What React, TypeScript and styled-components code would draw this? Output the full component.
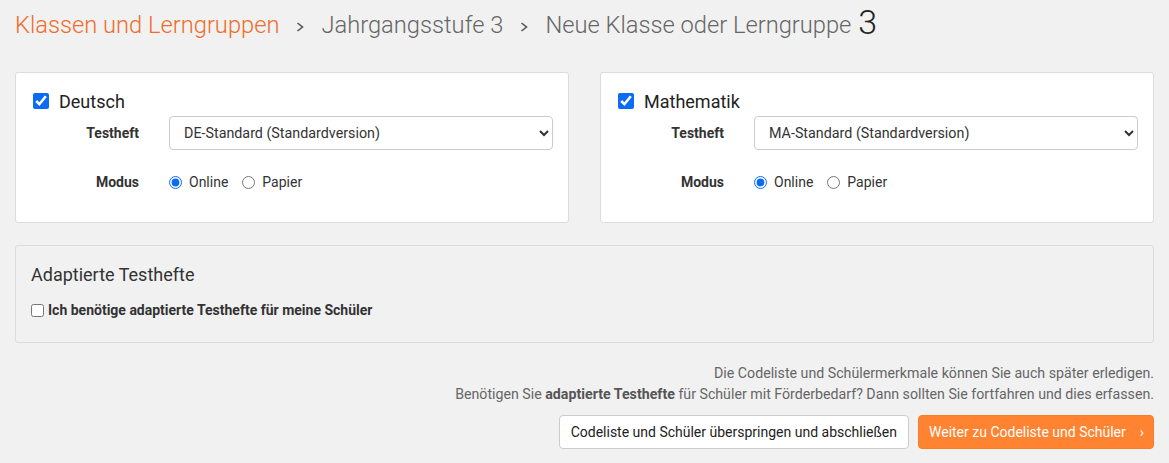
import { FC } from "react";
import styled, { createGlobalStyle } from "styled-components";

const GlobalStyle = createGlobalStyle`
  html, body {
    margin: 0;
    padding: 0;
    background: #f1f1f1;
  }
  body {
    font-family: Roboto, "Liberation Sans", Arial, sans-serif;
    color: #333;
  }
`;

const Page = styled.div`
  padding: 0 15px;
  width: 1139px;
`;

const Breadcrumb = styled.h1`
  margin: 0;
  height: 48px;
  display: flex;
  align-items: center;
  gap: 17px;
  font-size: 23.7px;
  font-weight: 300;
  color: #666;
  padding-top: 1px;

  .home {
    color: #ef6c2a;
  }
  .num {
    font-size: 34px;
    color: #222;
    margin-left: -10px;
    margin-top: -6px;
  }
  svg {
    margin-top: 3px;
  }
`;

const Chevron: FC = () => (
  <svg width="8" height="10" viewBox="0 0 8 10">
    <polyline points="1.5,1 6.5,5 1.5,9" fill="none" stroke="#555" strokeWidth="1.6" />
  </svg>
);

const CardRow = styled.div`
  display: grid;
  grid-template-columns: 1fr 1fr;
  gap: 31px;
  margin-top: 23px;
`;

const Card = styled.section`
  background: #fff;
  border: 1px solid #dcdcdc;
  border-radius: 3px;
  padding: 17px 15px 0 17px;
  height: 151px;
  box-sizing: border-box;
`;

const SubjectLabel = styled.label`
  display: flex;
  align-items: center;
  gap: 10px;
  font-size: 18px;
  color: #222;
  height: 22px;
`;

const BigCheck = styled.input`
  width: 16px;
  height: 16px;
  margin: 0;
  accent-color: #0b6bf5;
`;

const FormRow = styled.div<{ $top: number; $height: number }>`
  display: grid;
  grid-template-columns: 106px 1fr;
  column-gap: 30px;
  align-items: center;
  margin-top: ${(p) => p.$top}px;
  height: ${(p) => p.$height}px;
`;

const FieldLabel = styled.span`
  text-align: right;
  font-size: 14px;
  font-weight: 700;
  color: #333;
`;

const Select = styled.select`
  height: 34px;
  width: 100%;
  border: 1px solid #ccc;
  border-radius: 4px;
  background: #fff;
  font-family: inherit;
  font-size: 14.3px;
  color: #333;
  padding: 0 10px;
`;

const Radios = styled.div`
  display: flex;
  align-items: center;
  gap: 14px;
  font-size: 14px;
  color: #333;
`;

const RadioOption = styled.label`
  display: flex;
  align-items: center;
  gap: 7px;

  input {
    margin: 0;
    width: 13px;
    height: 13px;
    accent-color: #0b6bf5;
  }
`;

const AdaptivePanel = styled.section`
  margin-top: 22px;
  border: 1px solid #dcdcdc;
  border-radius: 3px;
  background: #f1f1f1;
  padding: 18px 15px 0 15px;
  height: 98px;
  box-sizing: border-box;

  h2 {
    margin: 0;
    font-size: 18px;
    font-weight: 400;
    color: #333;
    line-height: 22px;
  }
`;

const SmallCheckLabel = styled.label`
  display: flex;
  align-items: center;
  gap: 4px;
  margin-top: 16px;
  font-size: 14px;
  font-weight: 700;
  color: #333;

  input {
    margin: 0;
    width: 13px;
    height: 13px;
  }
`;

const Footer = styled.div`
  margin-top: 20px;
  display: flex;
  flex-direction: column;
  align-items: flex-end;

  p {
    margin: 0;
    font-size: 14.2px;
    line-height: 21px;
    color: #666;
  }
  b {
    color: #555;
  }
`;

const Buttons = styled.div`
  display: flex;
  gap: 9px;
  margin-top: 10px;
`;

const Button = styled.button<{ $primary?: boolean }>`
  height: 34px;
  box-sizing: border-box;
  border-radius: 4px;
  font-family: inherit;
  font-size: 14px;
  padding: ${(p) => (p.$primary ? "0 9px 0 10px" : "0 11px")};
  display: flex;
  align-items: center;
  gap: 14px;
  cursor: pointer;
  border: 1px solid ${(p) => (p.$primary ? "#f77d27" : "#ccc")};
  background: ${(p) => (p.$primary ? "#ff8330" : "#fff")};
  color: ${(p) => (p.$primary ? "#fff" : "#222")};
`;

interface SubjectProps {
  name: string;
  booklet: string;
  id: string;
}

const SubjectCard: FC<SubjectProps> = ({ name, booklet, id }) => (
  <Card>
    <SubjectLabel>
      <BigCheck type="checkbox" defaultChecked />
      {name}
    </SubjectLabel>
    <FormRow $top={4} $height={34}>
      <FieldLabel>Testheft</FieldLabel>
      <Select defaultValue={booklet}>
        <option>{booklet}</option>
      </Select>
    </FormRow>
    <FormRow $top={22} $height={20}>
      <FieldLabel>Modus</FieldLabel>
      <Radios>
        <RadioOption>
          <input type="radio" name={id} defaultChecked />
          Online
        </RadioOption>
        <RadioOption>
          <input type="radio" name={id} />
          Papier
        </RadioOption>
      </Radios>
    </FormRow>
  </Card>
);

const App: FC = () => {
  return (
    <Page>
      <GlobalStyle />
      <Breadcrumb>
        <span className="home">Klassen und Lerngruppen</span>
        <Chevron />
        <span>Jahrgangsstufe 3</span>
        <Chevron />
        <span>Neue Klasse oder Lerngruppe</span>
        <span className="num">3</span>
      </Breadcrumb>
      <CardRow>
        <SubjectCard id="de" name="Deutsch" booklet="DE-Standard (Standardversion)" />
        <SubjectCard id="ma" name="Mathematik" booklet="MA-Standard (Standardversion)" />
      </CardRow>
      <AdaptivePanel>
        <h2>Adaptierte Testhefte</h2>
        <SmallCheckLabel>
          <input type="checkbox" />
          Ich benötige adaptierte Testhefte für meine Schüler
        </SmallCheckLabel>
      </AdaptivePanel>
      <Footer>
        <p>Die Codeliste und Schülermerkmale können Sie auch später erledigen.</p>
        <p>
          Benötigen Sie <b>adaptierte Testhefte</b> für Schüler mit Förderbedarf? Dann sollten Sie fortfahren und dies erfassen.
        </p>
        <Buttons>
          <Button>Codeliste und Schüler überspringen und abschließen</Button>
          <Button $primary>
            Weiter zu Codeliste und Schüler <span>›</span>
          </Button>
        </Buttons>
      </Footer>
    </Page>
  );
};

export default App;
